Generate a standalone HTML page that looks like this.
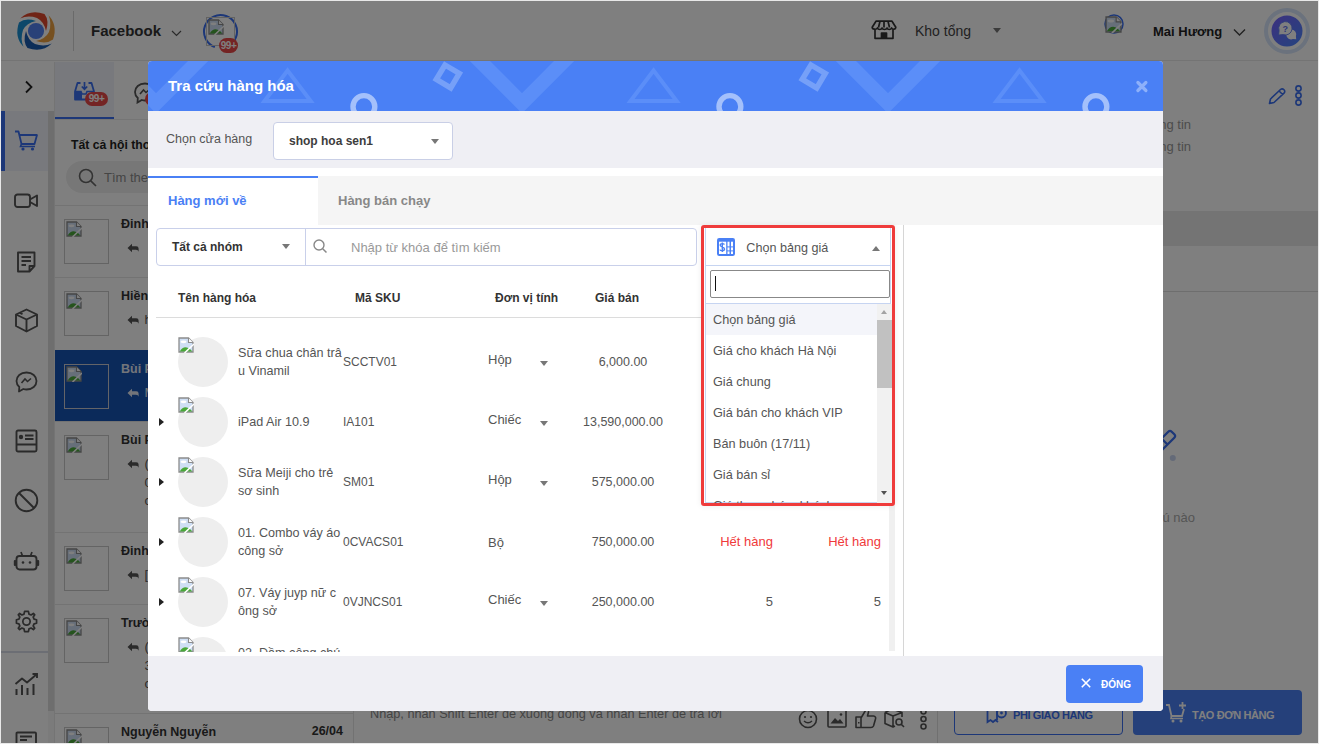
<!DOCTYPE html>
<html><head><meta charset="utf-8">
<style>
*{box-sizing:border-box;margin:0;padding:0}
html,body{width:1319px;height:744px;overflow:hidden;background:#fff;font-family:"Liberation Sans",sans-serif;color:#333}
.a{position:absolute}
.t{position:absolute;white-space:nowrap;line-height:1}
svg{display:block}
.bimg{position:absolute;width:16px;height:16px}
.cir{position:absolute;left:30px;width:50px;height:50px;border-radius:50%;background:#eee}
.exp{position:absolute;left:11px;width:0;height:0;border-left:5px solid #222;border-top:4px solid transparent;border-bottom:4px solid transparent}
.nm{position:absolute;left:90px;font-size:12.6px;line-height:18px;color:#555;white-space:nowrap}
.sku{left:195px;font-size:12px;color:#555}
.unit{left:340px;font-size:13px;color:#555}
.ucar{position:absolute;left:392px;width:0;height:0;border-top:5px solid #777;border-left:4px solid transparent;border-right:4px solid transparent}
.price{left:425px;width:100px;text-align:center;font-size:12.5px;color:#555}
.st1{left:525px;width:100px;text-align:right;font-size:13px;color:#555}
.st2{left:633px;width:100px;text-align:right;font-size:13px;color:#555}
.red{color:#f03a3a}
.opt{position:absolute;left:7px;width:165px;height:31px;font-size:12.7px;color:#555;line-height:31px;white-space:nowrap}
</style></head><body>
<svg width="0" height="0" style="position:absolute">
 <defs>
  <symbol id="bi" viewBox="0 0 16 16">
   <path d="M1,1 H10.5 L15,5.5 V15 H1 Z" fill="#cfdff5" stroke="#8c8c8c" stroke-width="1.3"/>
   <path d="M10.5,1 V5.5 H15" fill="#fff" stroke="#8c8c8c" stroke-width="1.1"/>
   <ellipse cx="5.5" cy="4.8" rx="3" ry="1.4" fill="#fff"/>
   <path d="M1.7,14.4 Q6,7.5 12,12 L14.4,14.4 Z" fill="#4aa83a"/>
   <path d="M6.5,16 L16,7" stroke="#fff" stroke-width="1.6"/>
  </symbol>
 </defs>
</svg>
<!-- ================= APP BACKGROUND ================= -->
<div id="app" class="a" style="left:0;top:0;width:1319px;height:744px;background:#fff;overflow:hidden">
<div class="a" style="left:0;top:0;width:1319px;height:61px;background:#fff;border-bottom:1px solid #e8e8e8"></div>
<svg class="a" style="left:14px;top:9px" width="44" height="44" viewBox="0 0 44 44">
 <path d="M6.2,9.5 Q16,0 30.5,5 Q35.5,11.5 32,22 Q30,12.5 23,9 Q14,6 6.2,9.5 Z" fill="#e0482c"/>
 <path transform="rotate(90 22 22)" d="M6.2,9.5 Q16,0 30.5,5 Q35.5,11.5 32,22 Q30,12.5 23,9 Q14,6 6.2,9.5 Z" fill="#eda040"/>
 <path transform="rotate(180 22 22)" d="M6.2,9.5 Q16,0 30.5,5 Q35.5,11.5 32,22 Q30,12.5 23,9 Q14,6 6.2,9.5 Z" fill="#1a5cb0"/>
 <path transform="rotate(270 22 22)" d="M6.2,9.5 Q16,0 30.5,5 Q35.5,11.5 32,22 Q30,12.5 23,9 Q14,6 6.2,9.5 Z" fill="#1a90d4"/>
 <circle cx="22" cy="22" r="8.1" fill="#5282f0"/>
</svg>
<div class="a" style="left:73px;top:11px;width:1px;height:40px;background:#d4d4d4"></div>
<div class="t" style="left:91px;top:23.3px;font-size:15px;font-weight:700;color:#333">Facebook</div>
<svg class="a" style="left:171px;top:30px" width="12" height="8"><polyline points="1,1 5.5,5.5 10,1" fill="none" stroke="#555" stroke-width="1.2"/></svg>
<svg class="a" style="left:202px;top:13px" width="37" height="37"><circle cx="18.5" cy="18.5" r="16.5" fill="none" stroke="#3a6ff0" stroke-width="2" stroke-dasharray="88 16" transform="rotate(110 18.5 18.5)"/></svg>
<div class="a" style="left:206px;top:17px;width:29px;height:29px;border:1px solid #c4c4c4"></div>
<div class="a" style="left:208px;top:19px"><svg width="16" height="16"><use href="#bi"/></svg></div>
<div class="a" style="left:219px;top:38px;width:19px;height:15px;border-radius:7.5px;background:#e84848"></div>
<div class="t" style="left:219px;top:40.5px;width:19px;text-align:center;font-size:10px;font-weight:700;color:#fff;letter-spacing:-0.5px">99+</div>
<svg class="a" style="left:871px;top:20px" width="26" height="20" viewBox="0 0 26 20"><path d="M5,1.2 H21 L24.8,7.2 C24.8,9.5 21.5,10 20.6,8 C19.7,10 16.7,10 16,8 C15.3,10 11.7,10 11,8 C10.3,10 7.3,10 6.4,8 C5.5,10 1.2,9.5 1.2,7.2 Z M4,9.5 V18.3 H22 V9.5 M10.5,18.3 V13 H15.5 V18.3 M9,1.2 L7.5,7.5 M13,1.2 V7.5 M17,1.2 L18.5,7.5" fill="none" stroke="#333" stroke-width="1.7" stroke-linejoin="round"/><rect x="10.5" y="13" width="5" height="5.3" fill="#333"/></svg>
<div class="t" style="left:915px;top:24px;font-size:14px;color:#444">Kho tổng</div>
<div class="a" style="left:993px;top:28px;width:0;height:0;border-top:5px solid #777;border-left:4px solid transparent;border-right:4px solid transparent"></div>
<svg class="a" style="left:1104px;top:14px" width="20" height="20"><circle cx="10" cy="10" r="9" fill="none" stroke="#3a6ff0" stroke-width="1.5"/></svg>
<div class="a" style="left:1105px;top:16px"><svg width="17" height="17"><use href="#bi"/></svg></div>
<div class="t" style="left:1153px;top:25px;font-size:13px;font-weight:700;color:#222">Mai Hương</div>
<svg class="a" style="left:1233px;top:28px" width="14" height="9"><polyline points="1,1.5 6.5,7 12,1.5" fill="none" stroke="#444" stroke-width="1.4"/></svg>
<svg class="a" style="left:1264px;top:8px" width="46" height="46" viewBox="0 0 46 46">
 <defs><linearGradient id="hg" x1="0" y1="0" x2="1" y2="1"><stop offset="0" stop-color="#7a62ff"/><stop offset="1" stop-color="#4a88ff"/></linearGradient></defs>
 <circle cx="23" cy="23" r="21" fill="none" stroke="#d6e4fa" stroke-width="4"/>
 <circle cx="23" cy="23" r="15.5" fill="url(#hg)"/>
 <path d="M31.9,28.1 L32.2,31.2 L28.9,31.1 A5,5 0 1 1 31.9,28.1 Z" fill="#fff"/>
 <path d="M15.1,22.6 L14.6,27 L19.1,26.6 A6.7,6.7 0 1 0 15.1,22.6 Z" fill="#fff" stroke="#5f7af0" stroke-width="0.9"/>
 <text x="21.3" y="23.5" font-size="9" font-weight="700" font-family="Liberation Sans" fill="#6070f0" text-anchor="middle">?</text>
</svg>
<div class="a" style="left:0;top:62px;width:48px;height:682px;background:#fff"></div>
<svg class="a" style="left:24px;top:80px" width="10" height="14"><polyline points="2,1.5 7.5,7 2,12.5" fill="none" stroke="#222" stroke-width="1.8"/></svg>
<div class="a" style="left:0;top:111px;width:48px;height:60px;background:#f0f3fa"></div>
<div class="a" style="left:1px;top:111px;width:4px;height:60px;background:#3a6ff0"></div>
<div class="a" style="left:48px;top:62px;width:7px;height:49px;background:#fff"></div>
<div class="a" style="left:48px;top:111px;width:7px;height:600px;background:#dcdcdc"></div><div class="a" style="left:48px;top:711px;width:7px;height:33px;background:#f6f6f6"></div><div class="a" style="left:54px;top:62px;width:1px;height:682px;background:#e8e8e8"></div>
<svg class="a" style="left:14px;top:130px" width="25" height="21" viewBox="0 0 25 21"><path d="M1,1.5 H4.5 L7.5,14 H20.5 L23,5 H6" fill="none" stroke="#3a6ff0" stroke-width="1.8" stroke-linejoin="round"/><path d="M7.5,14 L6.5,16.5 H21" fill="none" stroke="#3a6ff0" stroke-width="1.6"/><circle cx="9" cy="19" r="1.6" fill="#3a6ff0"/><circle cx="18.5" cy="19" r="1.6" fill="#3a6ff0"/></svg>
<svg class="a" style="left:14px;top:193px" width="25" height="16" viewBox="0 0 25 16"><rect x="1" y="1.5" width="15" height="12.5" rx="2.5" fill="none" stroke="#555" stroke-width="1.9"/><path d="M16,6.5 L23,2.5 V13 L16,9" fill="none" stroke="#555" stroke-width="1.9" stroke-linejoin="round"/></svg>
<svg class="a" style="left:16px;top:251px" width="21" height="22" viewBox="0 0 21 22"><path d="M2,1.5 H18.5 V15 L13.5,20.5 H2 Z M13.5,20.5 V15 H18.5" fill="none" stroke="#555" stroke-width="1.9" stroke-linejoin="round"/><path d="M5.5,6 H15 M5.5,10 H15 M5.5,14 H10" stroke="#555" stroke-width="1.8"/></svg>
<svg class="a" style="left:14px;top:308px" width="25" height="25" viewBox="0 0 25 25"><path d="M12.5,1.5 L23,6.5 V18 L12.5,23.5 L2,18 V6.5 Z M2,6.5 L12.5,11.5 L23,6.5 M12.5,11.5 V23.5 M6,5 L8.5,6.2" fill="none" stroke="#555" stroke-width="1.9" stroke-linejoin="round"/></svg>
<svg class="a" style="left:15px;top:371px" width="23" height="22" viewBox="0 0 23 22"><path d="M11.5,1.5 C17.5,1.5 21.5,5.3 21.5,10 C21.5,14.7 17.5,18.5 11.5,18.5 C10.3,18.5 9.3,18.3 8.3,18 L4,20.5 L4.3,16 C2.5,14.4 1.5,12.3 1.5,10 C1.5,5.3 5.5,1.5 11.5,1.5 Z" fill="none" stroke="#555" stroke-width="1.8" stroke-linejoin="round"/><path d="M6.5,12 L10,8 L12.5,10.5 L16,7.5" fill="none" stroke="#555" stroke-width="1.6"/></svg>
<svg class="a" style="left:15px;top:429px" width="23" height="24" viewBox="0 0 23 24"><rect x="1.5" y="1.5" width="20" height="21" rx="1.5" fill="none" stroke="#555" stroke-width="1.9"/><path d="M1.5,15.5 H21.5 M10,6.5 H18.5 M10,10 H18.5" stroke="#555" stroke-width="1.8"/><circle cx="6" cy="8" r="2.2" fill="#555"/></svg>
<svg class="a" style="left:14px;top:488px" width="25" height="25" viewBox="0 0 25 25"><circle cx="12.5" cy="12.5" r="10.8" fill="none" stroke="#555" stroke-width="1.9"/><path d="M5,5 L20,20" stroke="#555" stroke-width="1.9"/></svg>
<svg class="a" style="left:13px;top:551px" width="27" height="20" viewBox="0 0 27 20"><rect x="3.5" y="5" width="20" height="13.5" rx="3" fill="none" stroke="#555" stroke-width="1.9"/><path d="M8,1 L9.5,5 M19,1 L17.5,5" stroke="#555" stroke-width="1.7"/><rect x="0.8" y="9" width="2.5" height="6" rx="1" fill="#555"/><rect x="23.7" y="9" width="2.5" height="6" rx="1" fill="#555"/><circle cx="10" cy="11.5" r="1.3" fill="#555"/><circle cx="17" cy="11.5" r="1.3" fill="#555"/></svg>
<svg class="a" style="left:15px;top:610px" width="23" height="23" viewBox="0 0 24 24"><path d="M12,1.5 L14,1.5 L14.6,4.3 L16.8,5.2 L19.2,3.6 L20.6,5 L19,7.4 L19.9,9.6 L22.5,10.2 V13.8 L19.9,14.4 L19,16.6 L20.6,19 L19.2,20.4 L16.8,18.8 L14.6,19.7 L14,22.5 H10 L9.4,19.7 L7.2,18.8 L4.8,20.4 L3.4,19 L5,16.6 L4.1,14.4 L1.5,13.8 V10.2 L4.1,9.6 L5,7.4 L3.4,5 L4.8,3.6 L7.2,5.2 L9.4,4.3 L10,1.5 Z" fill="none" stroke="#555" stroke-width="1.8" stroke-linejoin="round"/><circle cx="12" cy="12" r="3.8" fill="none" stroke="#555" stroke-width="1.8"/></svg>
<div class="a" style="left:0;top:651px;width:48px;height:2px;background:#d8dde8"></div>
<svg class="a" style="left:14px;top:672px" width="25" height="24" viewBox="0 0 25 24"><path d="M1.5,12 L8,6.5 L13,10.5 L23,2" fill="none" stroke="#555" stroke-width="1.9" stroke-linejoin="round"/><path d="M18.5,2 H23 V6" fill="none" stroke="#555" stroke-width="1.9"/><path d="M2.5,17 V23 M8,13 V23 M13.5,16 V23 M19.5,12 V23" stroke="#555" stroke-width="2"/></svg>
<svg class="a" style="left:15px;top:731px" width="24" height="14" viewBox="0 0 24 14"><path d="M1.5,13 V2.5 Q1.5,1.5 2.5,1.5 H20 Q21,1.5 21,2.5 V13" fill="none" stroke="#555" stroke-width="1.9"/><path d="M5,5.5 H17 M5,9 H12" stroke="#555" stroke-width="1.8"/></svg>
<div class="a" style="left:55px;top:62px;width:299px;height:682px;background:#fff;border-right:1px solid #e4e4e4"></div>
<div class="a" style="left:55px;top:62px;width:59px;height:57px;background:#f0f3fa"></div>
<div class="a" style="left:55px;top:117px;width:59px;height:2px;background:#3a6ff0"></div>
<div class="a" style="left:55px;top:119px;width:290px;height:1px;background:#eaeaea"></div>
<svg class="a" style="left:74px;top:82px" width="21" height="19" viewBox="0 0 21 19"><path d="M6.5,1 H3.5 L1,9.5 V17.5 H18 L20,9.5 L17.5,1 H14.5" fill="none" stroke="#3a6ff0" stroke-width="1.8" stroke-linejoin="round"/><path d="M1,9.5 H7 L8,12 H12 L13,9.5 H20" fill="none" stroke="#3a6ff0" stroke-width="1.6"/><path d="M1,10 H7 L8,12 V17.5 H1 Z" fill="#3a6ff0"/><path d="M10.5,0 V7 M7.8,4.5 L10.5,7.3 L13.2,4.5" fill="none" stroke="#3a6ff0" stroke-width="1.7"/></svg>
<div class="a" style="left:85px;top:92px;width:23px;height:14px;border-radius:7px;background:#e84848"></div>
<div class="t" style="left:85px;top:94px;width:23px;text-align:center;font-size:10px;font-weight:700;color:#fff;letter-spacing:-0.5px">99+</div>
<svg class="a" style="left:133px;top:82px" width="24" height="22" viewBox="0 0 23 22"><path d="M11.5,1.5 C17.5,1.5 21.5,5.3 21.5,10 C21.5,14.7 17.5,18.5 11.5,18.5 C10.3,18.5 9.3,18.3 8.3,18 L4,20.5 L4.3,16 C2.5,14.4 1.5,12.3 1.5,10 C1.5,5.3 5.5,1.5 11.5,1.5 Z" fill="none" stroke="#555" stroke-width="1.8"/><path d="M6.5,12 L10,8 L12.5,10.5 L16,7.5" fill="none" stroke="#555" stroke-width="1.6"/></svg>
<div class="a" style="left:145px;top:92px;width:20px;height:14px;border-radius:7px;background:#e84848"></div>
<div class="t" style="left:71px;top:139px;font-size:12.2px;font-weight:700;color:#222">Tất cả hội thoại</div>
<div class="a" style="left:66px;top:161px;width:270px;height:32px;border-radius:16px;background:#efefef"></div>
<svg class="a" style="left:78px;top:168px" width="20" height="20"><circle cx="8" cy="8" r="6.5" fill="none" stroke="#666" stroke-width="1.6"/><path d="M12.8,12.8 L18,18" stroke="#666" stroke-width="1.7"/></svg>
<div class="t" style="left:104px;top:171px;font-size:13px;color:#8a8a8a">Tìm theo tên, số điện thoại</div>
<div class="a" style="left:55px;top:205px;width:298px;height:1px;background:#e6e6e6"></div>
<div class="a" style="left:55px;top:277px;width:298px;height:1px;background:#e6e6e6"></div>
<div class="a" style="left:64px;top:219px;width:45px;height:45px;border:1px solid #c8c8c8"></div>
<div class="a" style="left:66px;top:221px"><svg width="16" height="16"><use href="#bi"/></svg></div>
<div class="t" style="left:121px;top:218px;font-size:12.5px;font-weight:700;color:#333">Đinh Thị Hoa</div>
<svg class="a" style="left:127px;top:243px" width="12" height="10" viewBox="0 0 12 10"><path d="M5,0.8 L0.5,5 L5,9.2 V6.8 H9 Q11.2,6.8 11.6,8.8 V5.6 Q11.6,3.3 9.3,3.3 H5 Z" fill="#555"/></svg>

<div class="a" style="left:55px;top:350px;width:298px;height:1px;background:#e6e6e6"></div>
<div class="a" style="left:64px;top:291px;width:45px;height:45px;border:1px solid #c8c8c8"></div>
<div class="a" style="left:66px;top:293px"><svg width="16" height="16"><use href="#bi"/></svg></div>
<div class="t" style="left:121px;top:290px;font-size:12.5px;font-weight:700;color:#333">Hiền Nguyễn</div>
<svg class="a" style="left:127px;top:315px" width="12" height="10" viewBox="0 0 12 10"><path d="M5,0.8 L0.5,5 L5,9.2 V6.8 H9 Q11.2,6.8 11.6,8.8 V5.6 Q11.6,3.3 9.3,3.3 H5 Z" fill="#555"/></svg>
<div class="t" style="left:144.5px;top:313px;font-size:13px;color:#555">h</div>
<div class="a" style="left:55px;top:350px;width:290px;height:71px;background:#1654b4;width:298px"></div>
<div class="a" style="left:55px;top:421px;width:298px;height:1px;background:#e6e6e6"></div>
<div class="a" style="left:64px;top:364px;width:45px;height:45px;border:1px solid #c8c8d0"></div>
<div class="a" style="left:66px;top:366px"><svg width="16" height="16"><use href="#bi"/></svg></div>
<div class="t" style="left:121px;top:363px;font-size:12.5px;font-weight:700;color:#e6ebf5">Bùi Phương</div>
<svg class="a" style="left:127px;top:388px" width="12" height="10" viewBox="0 0 12 10"><path d="M5,0.8 L0.5,5 L5,9.2 V6.8 H9 Q11.2,6.8 11.6,8.8 V5.6 Q11.6,3.3 9.3,3.3 H5 Z" fill="#e6ebf5"/></svg>
<div class="t" style="left:144.5px;top:386px;font-size:13px;color:#e6ebf5">M</div>
<div class="a" style="left:55px;top:532px;width:298px;height:1px;background:#e6e6e6"></div>
<div class="a" style="left:64px;top:435px;width:45px;height:45px;border:1px solid #c8c8c8"></div>
<div class="a" style="left:66px;top:437px"><svg width="16" height="16"><use href="#bi"/></svg></div>
<div class="t" style="left:121px;top:434px;font-size:12.5px;font-weight:700;color:#333">Bùi Phương</div>
<svg class="a" style="left:127px;top:459px" width="12" height="10" viewBox="0 0 12 10"><path d="M5,0.8 L0.5,5 L5,9.2 V6.8 H9 Q11.2,6.8 11.6,8.8 V5.6 Q11.6,3.3 9.3,3.3 H5 Z" fill="#555"/></svg>
<div class="t" style="left:144.5px;top:457px;font-size:13px;color:#555">(</div>
<div class="t" style="left:144.5px;top:475.5px;font-size:13px;color:#555">0</div>
<div class="t" style="left:144.5px;top:494px;font-size:13px;color:#555">c</div>
<div class="a" style="left:55px;top:604px;width:298px;height:1px;background:#e6e6e6"></div>
<div class="a" style="left:64px;top:546px;width:45px;height:45px;border:1px solid #c8c8c8"></div>
<div class="a" style="left:66px;top:548px"><svg width="16" height="16"><use href="#bi"/></svg></div>
<div class="t" style="left:121px;top:545px;font-size:12.5px;font-weight:700;color:#333">Đinh Văn</div>
<svg class="a" style="left:127px;top:570px" width="12" height="10" viewBox="0 0 12 10"><path d="M5,0.8 L0.5,5 L5,9.2 V6.8 H9 Q11.2,6.8 11.6,8.8 V5.6 Q11.6,3.3 9.3,3.3 H5 Z" fill="#555"/></svg>
<div class="t" style="left:144.5px;top:568px;font-size:13px;color:#555">[</div>
<div class="a" style="left:55px;top:713px;width:298px;height:1px;background:#e6e6e6"></div>
<div class="a" style="left:64px;top:618px;width:45px;height:45px;border:1px solid #c8c8c8"></div>
<div class="a" style="left:66px;top:620px"><svg width="16" height="16"><use href="#bi"/></svg></div>
<div class="t" style="left:121px;top:617px;font-size:12.5px;font-weight:700;color:#333">Trường An</div>
<svg class="a" style="left:127px;top:642px" width="12" height="10" viewBox="0 0 12 10"><path d="M5,0.8 L0.5,5 L5,9.2 V6.8 H9 Q11.2,6.8 11.6,8.8 V5.6 Q11.6,3.3 9.3,3.3 H5 Z" fill="#555"/></svg>
<div class="t" style="left:144.5px;top:640px;font-size:13px;color:#555">(</div>
<div class="t" style="left:144.5px;top:658.5px;font-size:13px;color:#555">3</div>
<div class="t" style="left:144.5px;top:677px;font-size:13px;color:#555">c</div>
<div class="a" style="left:55px;top:800px;width:298px;height:1px;background:#e6e6e6"></div>
<div class="a" style="left:64px;top:727px;width:45px;height:45px;border:1px solid #c8c8c8"></div>
<div class="a" style="left:66px;top:729px"><svg width="16" height="16"><use href="#bi"/></svg></div>
<div class="t" style="left:121px;top:726px;font-size:12.5px;font-weight:700;color:#333">Nguyễn Nguyễn</div>
<div class="t" style="left:263px;top:725px;width:80px;text-align:right;font-size:12.5px;font-weight:700;color:#333">26/04</div>
<div class="a" style="left:354px;top:62px;width:584px;height:682px;background:#fff"></div>
<div class="a" style="left:937px;top:62px;width:1px;height:682px;background:#e0e0e0"></div>
<div class="t" style="left:370px;top:707.5px;font-size:12.7px;color:#888">Nhập, nhấn Shift Enter để xuống dòng và nhấn Enter để trả lời</div>
<svg class="a" style="left:798px;top:709px" width="20" height="20" viewBox="0 0 20 20"><circle cx="10" cy="10" r="8.5" fill="none" stroke="#555" stroke-width="1.6"/><circle cx="7" cy="8" r="1.1" fill="#555"/><circle cx="13" cy="8" r="1.1" fill="#555"/><path d="M6,12 Q10,15.5 14,12" fill="none" stroke="#555" stroke-width="1.5"/></svg>
<svg class="a" style="left:827px;top:709px" width="20" height="19" viewBox="0 0 20 19"><rect x="1" y="1" width="18" height="17" rx="1" fill="none" stroke="#555" stroke-width="1.6"/><path d="M3.5,14.5 L8,9 L11,12 L13,10 L16.5,14.5 Z" fill="#555"/><circle cx="14" cy="5.5" r="1.3" fill="#555"/></svg>
<svg class="a" style="left:855px;top:708px" width="22" height="21" viewBox="0 0 22 21"><path d="M1,9 H6 V19.5 H1 Z M6,10 L10.5,2.5 C11.5,1 14,1.5 13.5,4 L12.5,8 H18.5 C20.5,8 21,10 20.5,11 L18.5,18 C18,19 17,19.5 16,19.5 H6" fill="none" stroke="#555" stroke-width="1.6" stroke-linejoin="round"/><rect x="3" y="14" width="1.5" height="1.5" fill="#555"/></svg>
<svg class="a" style="left:884px;top:708px" width="22" height="20" viewBox="0 0 22 20"><path d="M1,4.5 L8,1 L18,4.5 V9 M1,4.5 V15.5 L9,19 L11,18 M1,4.5 L9,8 L18,4.5 M9,8 V19" fill="none" stroke="#555" stroke-width="1.6" stroke-linejoin="round"/><circle cx="15" cy="14" r="3" fill="none" stroke="#555" stroke-width="1.6"/><path d="M17.2,16.2 L20,19" stroke="#555" stroke-width="1.6"/></svg>
<svg class="a" style="left:919px;top:708px" width="9" height="22" viewBox="0 0 9 22"><circle cx="4.5" cy="3.5" r="2.5" fill="none" stroke="#555" stroke-width="1.6"/><circle cx="4.5" cy="11" r="2.5" fill="none" stroke="#555" stroke-width="1.6"/><circle cx="4.5" cy="18.5" r="2.5" fill="none" stroke="#555" stroke-width="1.6"/></svg>
<div class="a" style="left:938px;top:62px;width:381px;height:682px;background:#fff"></div>
<svg class="a" style="left:1268px;top:88px" width="18" height="17" viewBox="0 0 18 17"><path d="M1.5,15.5 L2.5,11 L12.5,1.5 C13.5,0.7 15,0.8 16,1.8 C17,2.8 17,4.2 16,5.2 L6,14.5 Z M11,3 L14.7,6.5" fill="none" stroke="#3a6ff0" stroke-width="1.6" stroke-linejoin="round"/></svg>
<svg class="a" style="left:1294px;top:85px" width="9" height="21" viewBox="0 0 9 21"><circle cx="4.5" cy="3.5" r="2.6" fill="none" stroke="#3a6ff0" stroke-width="1.6"/><circle cx="4.5" cy="10.5" r="2.6" fill="none" stroke="#3a6ff0" stroke-width="1.6"/><circle cx="4.5" cy="17.5" r="2.6" fill="none" stroke="#3a6ff0" stroke-width="1.6"/></svg>
<div class="t" style="left:1091px;top:118px;width:100px;text-align:right;font-size:13px;color:#999">Thông tin</div>
<div class="t" style="left:1091px;top:140px;width:100px;text-align:right;font-size:13px;color:#999">Thông tin</div>
<div class="a" style="left:938px;top:211px;width:381px;height:35px;background:#e8e8e8"></div>
<div class="a" style="left:938px;top:291px;width:381px;height:1px;background:#ddd"></div>
<svg class="a" style="left:1150px;top:420px" width="30" height="45" viewBox="0 0 30 45"><path d="M2,28 L18.3,11.7 Q20,10 21.7,11.7 L24.3,14.3 Q26,16 24.3,17.7 L8,34 M11.5,18.5 L17.5,24.5" fill="none" stroke="#3a6ff0" stroke-width="2.3"/><circle cx="22.8" cy="38.1" r="3" fill="#c8d4f0"/></svg>
<div class="t" style="left:995px;top:511px;width:200px;text-align:right;font-size:13px;color:#aaa">Chưa có ghi chú nào</div>
<div class="a" style="left:954px;top:694px;width:169px;height:41px;border:1.5px solid #3a6ff0;border-radius:4px"></div>
<svg class="a" style="left:986px;top:706px" width="22" height="18" viewBox="0 0 22 18"><path d="M1.5,2 H11 V14 M1.5,2 V16 L4.5,14 L7,16 L9.5,14 L12,16" fill="none" stroke="#3a6ff0" stroke-width="1.8"/><circle cx="15.5" cy="7" r="4.5" fill="none" stroke="#3a6ff0" stroke-width="1.8"/><circle cx="15.5" cy="7" r="1.4" fill="#3a6ff0"/></svg>
<div class="t" style="left:1013px;top:710px;font-size:11px;font-weight:700;color:#3a6ff0;letter-spacing:-0.4px">PHÍ GIAO HÀNG</div>
<div class="a" style="left:1133px;top:690px;width:169px;height:45px;border-radius:4px;background:#4a80f5"></div>
<svg class="a" style="left:1165px;top:701px" width="23" height="22" viewBox="0 0 23 22"><path d="M1,4 H4 L6.5,15 H17 L19,8" fill="none" stroke="#fff" stroke-width="1.8"/><path d="M6.5,15 L6,17.5 H18" fill="none" stroke="#fff" stroke-width="1.6"/><circle cx="8" cy="20" r="1.5" fill="#fff"/><circle cx="16" cy="20" r="1.5" fill="#fff"/><path d="M17.5,1 V8 M14,4.5 H21" stroke="#fff" stroke-width="1.8"/></svg>
<div class="t" style="left:1192px;top:710px;font-size:11px;font-weight:700;color:#fff;letter-spacing:-0.4px">TẠO ĐƠN HÀNG</div>
</div>
<div class="a" style="left:0;top:0;width:1319px;height:744px;background:rgba(0,0,0,0.5)"></div>

<!-- ================= MODAL ================= -->
<div id="modal" class="a" style="left:148px;top:61px;width:1015px;height:650px;background:#fff;border-radius:4px;overflow:hidden">
  <!-- header -->
  <svg class="a" style="left:0;top:0" width="1015" height="50">
   <rect width="1015" height="50" fill="#4a80f5"/>
   <g id="pat">
    <polyline points="-55,-21 8,42.25 71,-21" fill="none" stroke="#5b8ef8" stroke-width="14.3"/>
    <polygon points="139.6,9.5 116.5,40 162.7,40" fill="none" stroke="#5b8ef8" stroke-width="4"/>
    <circle cx="215.9" cy="45.5" r="10.9" fill="none" stroke="#a4c0fb" stroke-width="5.4"/>
    <polygon points="297,4 311.3,12.5 302.7,26.9 288.3,18.4" fill="none" stroke="#76a0f8" stroke-width="5.5"/>
   </g>
   <use href="#pat" x="366"/>
   <use href="#pat" x="732"/>
   <use href="#pat" x="1098"/>
      <path d="M989.9,21.5 L997.9,29.5 M997.9,21.5 L989.9,29.5" stroke="#8db0fa" stroke-width="3.2" stroke-linecap="round"/>
  </svg>
  <div class="t" style="left:20px;top:17px;font-size:15px;font-weight:700;color:#fff">Tra cứu hàng hóa</div>
  <!-- store row -->
  <div class="a" style="left:0;top:50px;width:1015px;height:57px;background:#efeff4"></div>
  <div class="t" style="left:18px;top:72px;font-size:12.5px;color:#555">Chọn cửa hàng</div>
  <div class="a" style="left:125px;top:61px;width:180px;height:38px;background:#fff;border:1px solid #c9cfe6;border-radius:4px"></div>
  <div class="t" style="left:141px;top:74px;font-size:12px;font-weight:700;color:#3d3d3d">shop hoa sen1</div>
  <div class="a" style="left:283px;top:78px;width:0;height:0;border-top:5px solid #777;border-left:4px solid transparent;border-right:4px solid transparent"></div>
  <!-- tabs -->
  <div class="a" style="left:170px;top:115px;width:845px;height:49px;background:#f5f5f5"></div>
  <div class="a" style="left:0;top:115px;width:170px;height:2px;background:#4a80f5"></div>
  <div class="t" style="left:20px;top:133px;font-size:13px;font-weight:700;color:#4a80f5">Hàng mới về</div>
  <div class="t" style="left:190px;top:133px;font-size:13px;font-weight:700;color:#888">Hàng bán chạy</div>
  <!-- search group -->
  <div class="a" style="left:8px;top:167px;width:541px;height:38px;border:1px solid #c9d0ea;border-radius:4px"></div>
  <div class="a" style="left:157px;top:168px;width:1px;height:36px;background:#c9d0ea"></div>
  <div class="t" style="left:24px;top:180px;font-size:12px;font-weight:700;color:#333">Tất cả nhóm</div>
  <div class="a" style="left:134px;top:183px;width:0;height:0;border-top:5px solid #777;border-left:4px solid transparent;border-right:4px solid transparent"></div>
  <svg class="a" style="left:165px;top:178px" width="15" height="15"><circle cx="6" cy="6" r="5" fill="none" stroke="#888" stroke-width="1.4"/><path d="M9.7,9.7 L13.5,13.5" stroke="#888" stroke-width="1.5"/></svg>
  <div class="t" style="left:203px;top:180px;font-size:13px;color:#999">Nhập từ khóa để tìm kiếm</div>
  <!-- table header -->
  <div class="t" style="left:30px;top:231px;font-size:12px;font-weight:700;color:#333">Tên hàng hóa</div>
  <div class="t" style="left:207px;top:231px;font-size:12px;font-weight:700;color:#333">Mã SKU</div>
  <div class="t" style="left:347px;top:231px;font-size:12px;font-weight:700;color:#333">Đơn vị tính</div>
  <div class="t" style="left:447px;top:231px;font-size:12px;font-weight:700;color:#333">Giá bán</div>
  <div class="a" style="left:8px;top:256px;width:739px;height:1px;background:#dcdcdc"></div>
  <!-- rows -->
  <div class="a" style="left:0;top:257px;width:741px;height:334px;overflow:hidden">
   <div class="a" style="left:0;top:-257px;width:741px;height:650px">
<div class="cir" style="top:276px"></div><div class="bimg" style="left:30px;top:276px"><svg width="16" height="16"><use href="#bi"/></svg></div>
<div class="nm" style="top:283px">Sữa chua chân trâ<br>u Vinamil</div>
<div class="t sku" style="top:295px">SCCTV01</div>
<div class="t unit" style="top:292px">Hộp</div>
<div class="ucar" style="top:300px"></div>
<div class="t price" style="top:295px">6,000.00</div>
<div class="cir" style="top:336px"></div><div class="bimg" style="left:30px;top:336px"><svg width="16" height="16"><use href="#bi"/></svg></div>
<div class="exp" style="top:357px"></div>
<div class="nm" style="top:352px">iPad Air 10.9</div>
<div class="t sku" style="top:355px">IA101</div>
<div class="t unit" style="top:352px">Chiếc</div>
<div class="ucar" style="top:360px"></div>
<div class="t price" style="top:355px">13,590,000.00</div>
<div class="cir" style="top:396px"></div><div class="bimg" style="left:30px;top:396px"><svg width="16" height="16"><use href="#bi"/></svg></div>
<div class="exp" style="top:417px"></div>
<div class="nm" style="top:403px">Sữa Meiji cho trẻ<br>sơ sinh</div>
<div class="t sku" style="top:415px">SM01</div>
<div class="t unit" style="top:412px">Hộp</div>
<div class="ucar" style="top:420px"></div>
<div class="t price" style="top:415px">575,000.00</div>
<div class="cir" style="top:456px"></div><div class="bimg" style="left:30px;top:456px"><svg width="16" height="16"><use href="#bi"/></svg></div>
<div class="exp" style="top:477px"></div>
<div class="nm" style="top:463px">01. Combo váy áo<br>công sở</div>
<div class="t sku" style="top:475px">0CVACS01</div>
<div class="t unit" style="top:475px">Bộ</div>
<div class="t price" style="top:475px">750,000.00</div>
<div class="t st1 red" style="top:474px">Hết hàng</div>
<div class="t st2 red" style="top:474px">Hết hàng</div>
<div class="cir" style="top:516px"></div><div class="bimg" style="left:30px;top:516px"><svg width="16" height="16"><use href="#bi"/></svg></div>
<div class="exp" style="top:537px"></div>
<div class="nm" style="top:523px">07. Váy juyp nữ c<br>ông sở</div>
<div class="t sku" style="top:535px">0VJNCS01</div>
<div class="t unit" style="top:532px">Chiếc</div>
<div class="ucar" style="top:540px"></div>
<div class="t price" style="top:535px">250,000.00</div>
<div class="t st1" style="top:534px">5</div>
<div class="t st2" style="top:534px">5</div>
<div class="cir" style="top:576px"></div><div class="bimg" style="left:30px;top:576px"><svg width="16" height="16"><use href="#bi"/></svg></div>
<div class="exp" style="top:597px"></div>
<div class="nm" style="top:583px">02. Đầm công chú<br>a</div>
<div class="t sku" style="top:595px">0DCC01</div>
<div class="t unit" style="top:592px">Chiếc</div>
<div class="ucar" style="top:600px"></div>
<div class="t price" style="top:595px">350,000.00</div>
<div class="t st1" style="top:594px">5</div>
<div class="t st2" style="top:594px">5</div>
   </div>
  </div>
  <div class="a" style="left:741px;top:257px;width:6px;height:333px;background:#f0f0f0"></div>
  <div class="a" style="left:755px;top:164px;width:1px;height:431px;background:#d6d6d6"></div>
  <!-- footer -->
  <div class="a" style="left:0;top:595px;width:1015px;height:55px;background:#efeff4"></div>
  <div class="a" style="left:918px;top:604px;width:77px;height:38px;background:#4a80f5;border-radius:4px"></div>
  <svg class="a" style="left:933px;top:617px" width="10" height="10"><path d="M0.8,0.8 L9.2,9.2 M9.2,0.8 L0.8,9.2" stroke="#fff" stroke-width="1.6"/></svg>
  <div class="t" style="left:953px;top:619px;font-size:10px;font-weight:700;color:#fff">ĐÓNG</div>
</div>

<!-- ================= DROPDOWN ================= -->
<div id="dd" class="a" style="left:701px;top:225px;width:194px;height:281px;border:3px solid #ef3b3b;border-radius:3px;background:#fff;overflow:hidden;box-shadow:0 0 6px rgba(0,0,0,0.08)">
  <div class="a" style="left:1px;top:0;width:186px;height:275px;border:1px solid #c6d4f1;border-top:none"></div>
  <svg class="a" style="left:13px;top:10px" width="18" height="18" viewBox="0 0 18 18">
   <rect x="0" y="0" width="18" height="18" rx="2.2" fill="#4a80f5"/>
   <rect x="2" y="3.7" width="7.2" height="12.3" fill="#fff"/>
   <rect x="10.5" y="3.7" width="2" height="4.7" fill="#fff"/><rect x="14" y="3.7" width="2" height="4.7" fill="#fff"/>
   <rect x="10.5" y="9.4" width="2" height="3" fill="#fff"/><rect x="14" y="9.4" width="2" height="3" fill="#fff"/>
   <rect x="10.5" y="13.4" width="2" height="2.6" fill="#fff"/><rect x="14" y="13.4" width="2" height="2.6" fill="#fff"/>
   <path d="M7.3,6.6 C6.9,5.3 3.1,5.1 3.2,7.3 C3.3,9.1 7.5,8.7 7.5,11 C7.5,13.2 3.3,13 3,11.6 M5.3,4.4 V14" fill="none" stroke="#4a80f5" stroke-width="1.4"/>
  </svg>
  <div class="t" style="left:42.3px;top:13.5px;font-size:12.6px;color:#555">Chọn bảng giá</div>
  <div class="a" style="left:168px;top:18px;width:0;height:0;border-bottom:5px solid #777;border-left:4px solid transparent;border-right:4px solid transparent"></div>
  <div class="a" style="left:2px;top:37px;width:185px;height:1px;background:#c6d4f1"></div>
  <div class="a" style="left:6px;top:42px;width:180px;height:28px;border:1px solid #888;border-radius:2px"></div>
  <div class="a" style="left:11px;top:48px;width:1px;height:15px;background:#111"></div>
  <div class="a" style="left:2px;top:74.5px;width:185px;height:1px;background:#c6d4f1"></div>
  <div class="a" style="left:2px;top:75.5px;width:171px;height:200px;overflow:hidden">
    <div class="a" style="left:0;top:0;width:171px;height:31px;background:#f4f5fa"></div>
    <div class="opt" style="top:1.5px">Chọn bảng giá</div>
    <div class="opt" style="top:32.5px">Giá cho khách Hà Nội</div>
    <div class="opt" style="top:63.5px">Giá chung</div>
    <div class="opt" style="top:94.5px">Giá bán cho khách VIP</div>
    <div class="opt" style="top:125.5px">Bán buôn (17/11)</div>
    <div class="opt" style="top:156.5px">Giá bán sỉ</div>
    <div class="opt" style="top:187.5px">Giá theo nhóm khách</div>
  </div>
  <div class="a" style="left:173px;top:75.5px;width:15px;height:200px;background:#f1f1f1"></div>
  <div class="a" style="left:173px;top:92px;width:15px;height:68px;background:#c1c1c1"></div>
  <div class="a" style="left:177px;top:82px;width:0;height:0;border-bottom:4px solid #a3a3a3;border-left:3.5px solid transparent;border-right:3.5px solid transparent"></div>
  <div class="a" style="left:177px;top:263px;width:0;height:0;border-top:4px solid #505050;border-left:3.5px solid transparent;border-right:3.5px solid transparent"></div>
</div>

<!-- frame -->
<div class="a" style="left:0;top:0;width:1319px;height:1px;background:#e8e8e8"></div>
<div class="a" style="left:0;top:743px;width:1319px;height:1px;background:#e8e8e8"></div>
<div class="a" style="left:0;top:0;width:1px;height:744px;background:#e8e8e8"></div>
<div class="a" style="left:1318px;top:0;width:1px;height:744px;background:#e8e8e8"></div>
</body></html>
